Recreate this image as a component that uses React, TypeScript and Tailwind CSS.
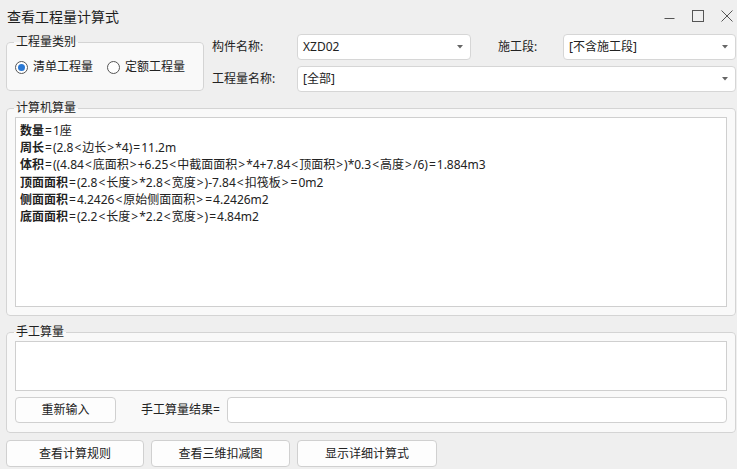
import React from 'react';

const font = { fontFamily: '"Microsoft YaHei", "Noto Sans", "Noto Sans CJK SC", sans-serif' };

const lines: { key: string; rest: string }[] = [
  { key: '数量', rest: '=1座' },
  { key: '周长', rest: '=(2.8<边长>*4)=11.2m' },
  { key: '体积', rest: '=((4.84<底面积>+6.25<中截面面积>*4+7.84<顶面积>)*0.3<高度>/6)=1.884m3' },
  { key: '顶面面积', rest: '=(2.8<长度>*2.8<宽度>)-7.84<扣筏板>=0m2' },
  { key: '侧面面积', rest: '=4.2426<原始侧面面积>=4.2426m2' },
  { key: '底面面积', rest: '=(2.2<长度>*2.2<宽度>)=4.84m2' },
];

// the reference font sets < > = with wide side bearings
function spaced(text: string) {
  return text.split(/([<>=])/).map((part, i) =>
    part === '<' || part === '>' || part === '=' ? (
      <span key={i} className="mx-[1px]">
        {part}
      </span>
    ) : (
      part
    )
  );
}

const Combo: React.FC<{ value: string; className?: string }> = ({ value, className }) => (
  <div
    className={`h-[26px] flex items-center justify-between bg-white border border-[#d6d6d6] rounded-[4px] pl-[5px] pr-[7px] text-[12px] text-[#222] ${className ?? ''}`}
  >
    <span>{value}</span>
    <svg width="6" height="4" viewBox="0 0 6 4">
      <path d="M0 0 L6 0 L3 3.5 Z" fill="#666" />
    </svg>
  </div>
);

const Radio: React.FC<{ checked?: boolean; label: string }> = ({ checked, label }) => (
  <label className="flex items-center gap-[5px] text-[12px] text-[#222]">
    <span className="w-[13px] h-[13px] rounded-full border border-[#555] bg-white flex items-center justify-center">
      {checked && <span className="w-[7px] h-[7px] rounded-full bg-[#2a78d4]" />}
    </span>
    {label}
  </label>
);

const Btn: React.FC<{ label: string; className?: string }> = ({ label, className }) => (
  <button
    className={`bg-[#fdfdfd] border border-[#d0d0d0] rounded-[4px] text-[12px] text-[#222] flex items-center justify-center ${className ?? ''}`}
  >
    {label}
  </button>
);

export default function App() {
  return (
    <div
      className="w-[737px] h-[469px] bg-[#efefef] flex flex-col overflow-hidden text-[#222]"
      style={font}
    >
      {/* title bar */}
      <div className="h-[32px] flex items-center justify-between pl-[7px] pr-[4px] shrink-0">
        <span className="text-[14px] text-[#1e1e1e]">查看工程量计算式</span>
        <div className="flex items-center gap-[17px]">
          <svg width="11" height="11" viewBox="0 0 11 11">
            <path d="M0.5 7.5 H10.5" stroke="#555" strokeWidth="1" />
          </svg>
          <svg width="12" height="12" viewBox="0 0 12 12">
            <rect x="0.5" y="0.5" width="11" height="11" fill="none" stroke="#555" strokeWidth="1" />
          </svg>
          <svg width="12" height="12" viewBox="0 0 12 12">
            <path d="M0.5 0.5 L11.5 11.5 M11.5 0.5 L0.5 11.5" stroke="#555" strokeWidth="1" />
          </svg>
        </div>
      </div>

      <div className="flex flex-col pl-[6px] pr-[1px]">
        {/* top row */}
        <div className="flex items-start pt-[2px]">
          <fieldset className="w-[198px] h-[57px] border border-[#d4d4d4] rounded-[4px] bg-[#f9f9f9] px-[9px]">
            <legend className="ml-[-2px] px-[2px] text-[12px] leading-[16px]">工程量类别</legend>
            <div className="flex items-center gap-[14px] pt-[8px] -ml-[1px]">
              <Radio checked label="清单工程量" />
              <Radio label="定额工程量" />
            </div>
          </fieldset>
          <div className="flex-1 flex flex-col gap-[6px] ml-[8px]">
            <div className="flex items-center">
              <span className="w-[85px] text-[12px]">构件名称:</span>
              <Combo value="XZD02" className="w-[174px]" />
              <span className="w-[92px] pl-[27px] text-[12px]">施工段:</span>
              <Combo value="[不含施工段]" className="flex-1" />
            </div>
            <div className="flex items-center">
              <span className="w-[85px] text-[12px]">工程量名称:</span>
              <Combo value="[全部]" className="flex-1" />
            </div>
          </div>
        </div>

        {/* computer quantity */}
        <fieldset className="mt-[8px] h-[216px] border border-[#d4d4d4] rounded-[4px] bg-[#f9f9f9] px-[8px] pb-[9px] flex flex-col">
          <legend className="ml-[-1px] px-[2px] text-[12px] leading-[16px]">计算机算量</legend>
          <div className="mt-[1px] h-[190px] bg-white border border-[#cfcfcf] pl-[4px] pt-[4px] text-[12px] leading-[17.2px]">
            {lines.map((l) => (
              <div key={l.key} className="whitespace-pre">
                <span className="font-bold">{l.key}</span>
                {spaced(l.rest)}
              </div>
            ))}
          </div>
        </fieldset>

        {/* manual quantity */}
        <fieldset className="mt-[8px] h-[109px] border border-[#d4d4d4] rounded-[4px] bg-[#f9f9f9] px-[8px] flex flex-col">
          <legend className="ml-[-1px] px-[2px] text-[12px] leading-[16px]">手工算量</legend>
          <div className="mt-[1px] h-[50px] bg-white border border-[#cfcfcf]" />
          <div className="flex items-center mt-[6px]">
            <Btn label="重新输入" className="w-[101px] h-[26px]" />
            <span className="ml-[25px] w-[86px] text-[12px]">手工算量结果=</span>
            <div className="flex-1 h-[26px] bg-white border border-[#d0d0d0] rounded-[4px]" />
          </div>
        </fieldset>

        {/* bottom buttons */}
        <div className="flex gap-[7px] mt-[7px]">
          <Btn label="查看计算规则" className="w-[138px] h-[27px]" />
          <Btn label="查看三维扣减图" className="w-[139px] h-[27px]" />
          <Btn label="显示详细计算式" className="w-[140px] h-[27px]" />
        </div>
      </div>
    </div>
  );
}
